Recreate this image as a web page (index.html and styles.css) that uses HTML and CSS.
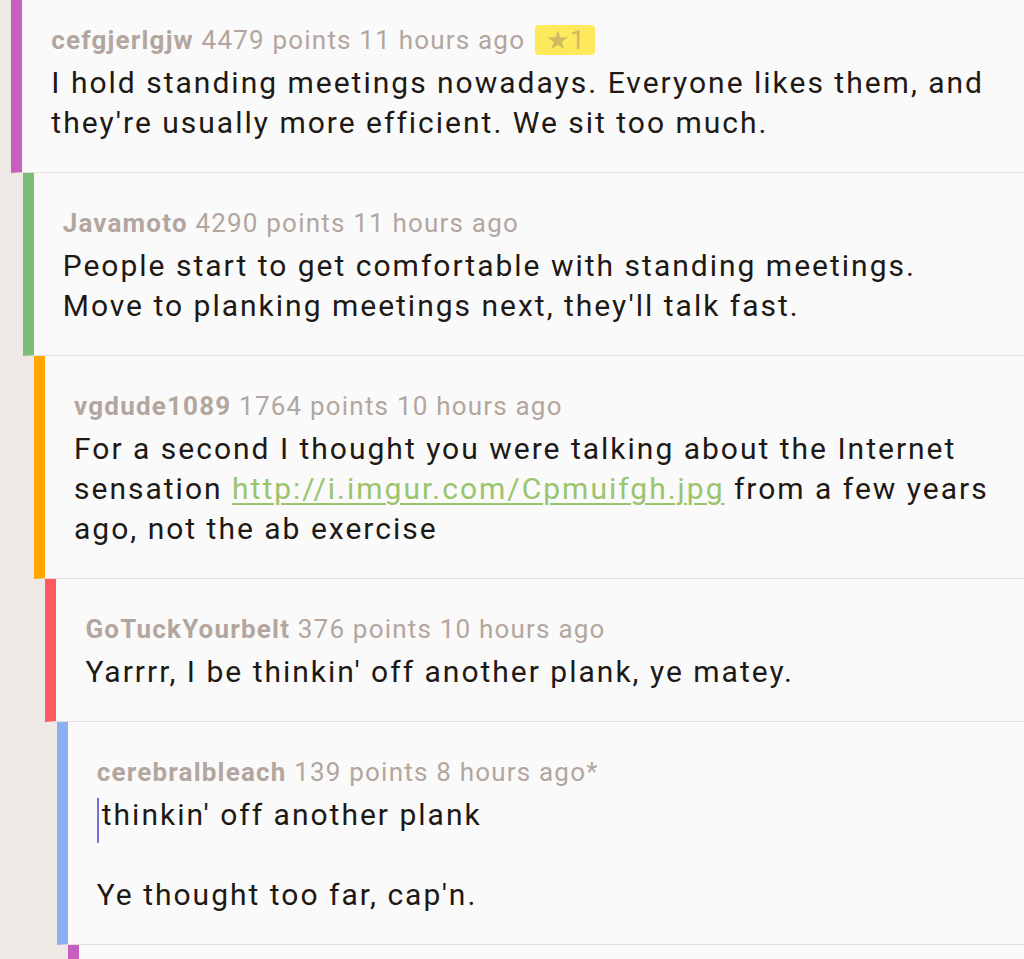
FILE: index.html
```html
<!DOCTYPE html>
<html>
<head>
<meta charset="utf-8">
<link rel="stylesheet" href="styles.css">
</head>
<body>
<div class="thread">
  <div class="comment d0 c-purple">
    <div class="meta"><span class="user">cefgjerlgjw</span> 4479 points 11 hours ago <span class="badge">★1</span></div>
    <div class="body">I hold standing meetings nowadays. Everyone likes them, and they're usually more efficient. We sit too much.</div>
  </div>
  <div class="comment d1 c-green">
    <div class="meta"><span class="user">Javamoto</span> 4290 points 11 hours ago</div>
    <div class="body">People start to get comfortable with standing meetings. Move to planking meetings next, they'll talk fast.</div>
  </div>
  <div class="comment d2 c-orange">
    <div class="meta"><span class="user">vgdude1089</span> 1764 points 10 hours ago</div>
    <div class="body">For a second I thought you were talking about the Internet sensation <a class="link" href="#">http://i.imgur.com/Cpmuifgh.jpg</a> from a few years ago, not the ab exercise</div>
  </div>
  <div class="comment d3 c-red">
    <div class="meta"><span class="user">GoTuckYourbelt</span> 376 points 10 hours ago</div>
    <div class="body">Yarrrr, I be thinkin' off another plank, ye matey.</div>
  </div>
  <div class="comment d4 c-blue">
    <div class="meta"><span class="user">cerebralbleach</span> 139 points 8 hours ago*</div>
    <div class="body"><span class="cursor"></span>thinkin' off another plank</div>
    <div class="body">&nbsp;</div>
    <div class="body">Ye thought too far, cap'n.</div>
  </div>
  <div class="comment d5 c-purple">
    <div class="meta">&nbsp;</div>
  </div>
</div>
</body>
</html>
```
FILE: styles.css
```css
html, body {
  margin: 0;
  padding: 0;
  background: #efe9e5;
  font-family: Roboto, "Noto Sans", sans-serif;
}
.thread {
  margin-top: -10px;
  overflow: hidden;
}
.comment {
  background: #fafafa;
  border-left: 11.35px solid #c860c0;
  border-bottom: 1px solid #e5dcd8;
  padding: 35px 26px 29px 29px;
}
.d0 { margin-left: 11.35px; }
.d1 { margin-left: 22.7px; }
.d2 { margin-left: 34.05px; }
.d3 { margin-left: 45.4px; }
.d4 { margin-left: 56.75px; }
.d5 { margin-left: 68.1px; }
.c-purple { border-left-color: #c65fbf; }
.c-green { border-left-color: #7cbd78; }
.c-orange { border-left-color: #ffa600; }
.c-red { border-left-color: #ff5a5f; }
.c-blue { border-left-color: #8caff0; }
.meta {
  font-size: 26px;
  line-height: 30px;
  letter-spacing: 1.2px;
  color: #b3a69e;
  margin-bottom: 8px;
}
.user {
  font-weight: bold;
  letter-spacing: 1.2px;
}
.badge {
  display: inline-block;
  background: #fde95b;
  color: #cfb964;
  border-radius: 4px;
  padding: 0 9px 0 11px;
  line-height: 30px;
  margin-left: 2px;
}
.body {
  font-size: 30px;
  line-height: 40px;
  letter-spacing: 2px;
  color: #1e1915;
}
.link {
  color: #9bc46c;
  text-decoration: underline;
  text-decoration-thickness: 2px;
  text-underline-offset: 4px;
}
.cursor {
  position: relative;
  display: inline-block;
  width: 0;
  height: 0;
  margin-right: 5px;
}
.cursor::before {
  content: "";
  position: absolute;
  left: 0;
  top: -27px;
  width: 2px;
  height: 45px;
  background: #7572dc;
}
```
